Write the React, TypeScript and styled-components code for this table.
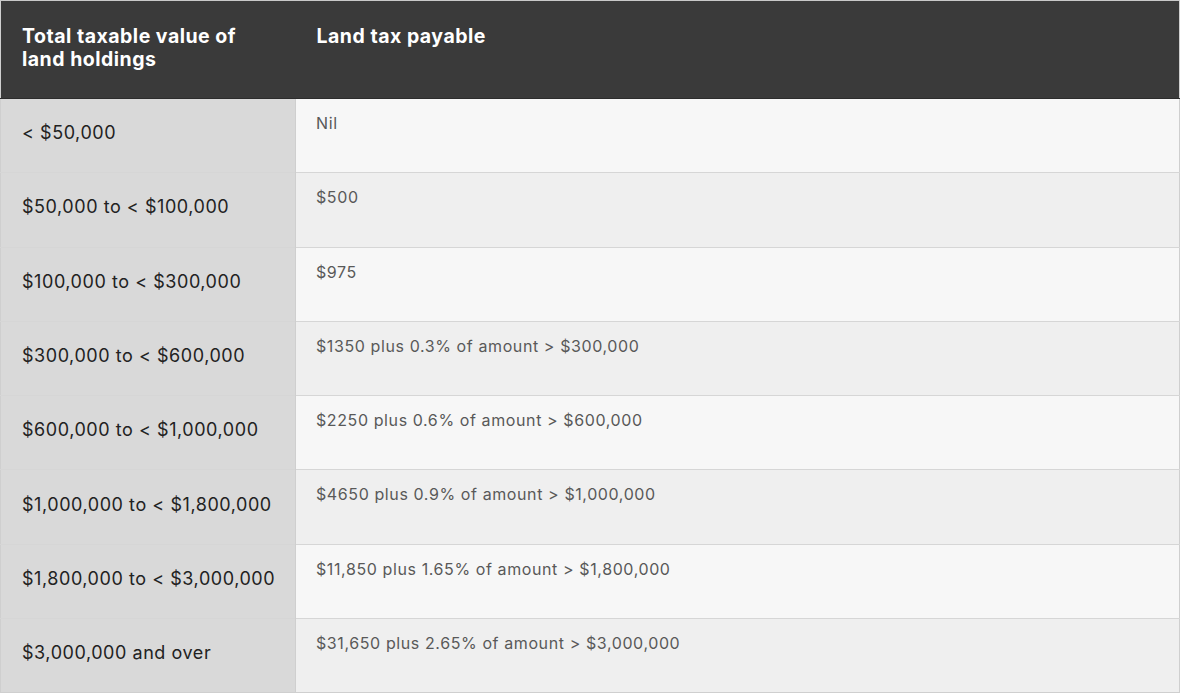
import React from "react";
import styled, { createGlobalStyle } from "styled-components";

const GlobalStyle = createGlobalStyle`
  html, body {
    margin: 0;
    padding: 0;
    background: #ffffff;
  }
  body {
    font-family: "Inter", "Liberation Sans", sans-serif;
  }
`;

const Table = styled.table`
  width: 1180px;
  border-collapse: collapse;
  border: 1px solid #cfcfcf;
  border-top-color: #c8c8c8;
  table-layout: fixed;
`;

const HeadCell = styled.th`
  background: #3a3a3a;
  color: #ffffff;
  text-align: left;
  vertical-align: top;
  font-size: 19.5px;
  font-weight: 700;
  line-height: 23px;
  letter-spacing: 0.5px;
  height: 98px;
  padding: 24px 12px 0 21px;
  box-sizing: border-box;
  border-bottom: 1px solid #2c2c2c;
`;

const Row = styled.tr<{ $alt: boolean }>`
  height: 74.3px;
  border-top: 1px solid #d6d6d6;
  background: ${(p) => (p.$alt ? "#efefef" : "#f7f7f7")};
`;

const RangeCell = styled.td`
  background: #d9d9d9;
  color: #222222;
  font-size: 18px;
  line-height: 22px;
  letter-spacing: 0.55px;
  white-space: nowrap;
  padding: 0 8px 5px 21px;
  vertical-align: middle;
  border-right: 1px solid #cfcfcf;
`;

const TaxCell = styled.td`
  color: #595959;
  font-size: 16px;
  line-height: 20px;
  letter-spacing: 0.6px;
  padding: 14px 20px 0 20px;
  vertical-align: top;
`;

const rows: [string, string][] = [
  ["< $50,000", "Nil"],
  ["$50,000 to < $100,000", "$500"],
  ["$100,000 to < $300,000", "$975"],
  ["$300,000 to < $600,000", "$1350 plus 0.3% of amount > $300,000"],
  ["$600,000 to < $1,000,000", "$2250 plus 0.6% of amount > $600,000"],
  ["$1,000,000 to < $1,800,000", "$4650 plus 0.9% of amount > $1,000,000"],
  ["$1,800,000 to < $3,000,000", "$11,850 plus 1.65% of amount > $1,800,000"],
  ["$3,000,000 and over", "$31,650 plus 2.65% of amount > $3,000,000"],
];

export default function App(): JSX.Element {
  return (
    <>
      <GlobalStyle />
      <Table>
        <colgroup>
          <col style={{ width: 295 }} />
          <col />
        </colgroup>
        <thead>
          <tr>
            <HeadCell>
              Total taxable value of
              <br />
              land holdings
            </HeadCell>
            <HeadCell>Land tax payable</HeadCell>
          </tr>
        </thead>
        <tbody>
          {rows.map(([range, tax], i) => (
            <Row key={range} $alt={i % 2 === 1}>
              <RangeCell>{range}</RangeCell>
              <TaxCell>{tax}</TaxCell>
            </Row>
          ))}
        </tbody>
      </Table>
    </>
  );
}
